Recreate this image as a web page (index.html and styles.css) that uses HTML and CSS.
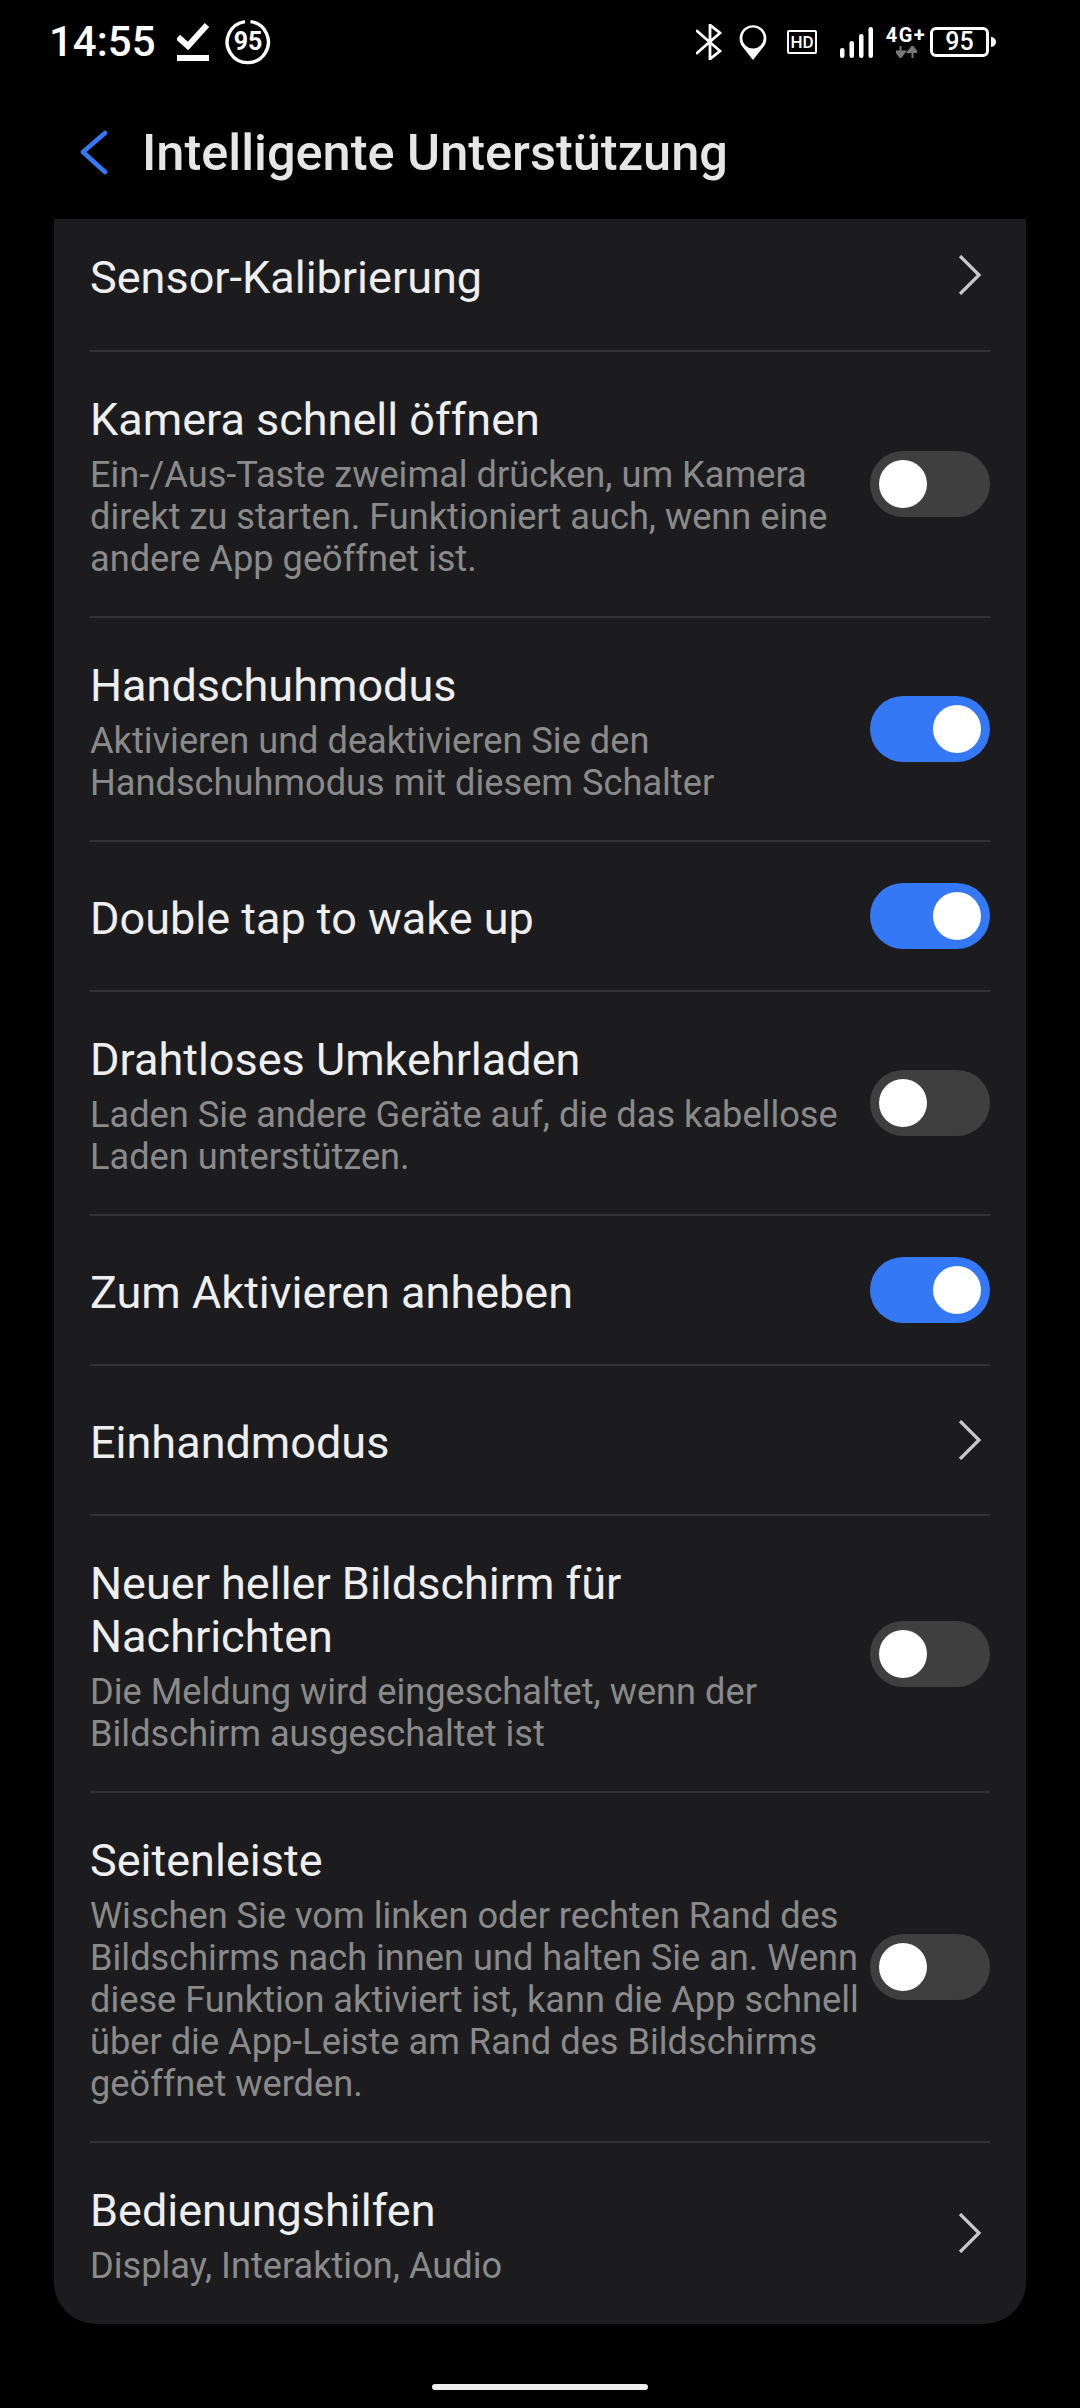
FILE: index.html
```html
<!DOCTYPE html>
<html lang="de">
<head>
    <meta charset="UTF-8">
    <meta name="viewport" content="width=device-width, initial-scale=1.0">
    <title>Intelligente Unterstützung</title>
    <link rel="stylesheet" href="styles.css">
</head>
<body>
    <div class="status">
        <div class="status-left">
            <span class="time">14:55</span>
            <svg class="ico-check" width="32" height="38" viewBox="0 0 32 38">
                <path d="M1 14 L11 23 L30 2" fill="none" stroke="#fff" stroke-width="6"/>
                <rect x="0" y="32" width="32" height="6" fill="#fff"/>
            </svg>
            <div class="ring">
                <svg width="46" height="46" viewBox="0 0 46 46">
                    <path d="M25.5 2.6 A20.6 20.6 0 1 1 20 2.6" fill="none" stroke="#fff" stroke-width="3.4"/>
                </svg>
                <span>95</span>
            </div>
        </div>
        <div class="status-right">
            <svg class="ico-bt" width="26" height="36" viewBox="0 0 26 36">
                <path d="M1 7 L24 27 L14 35 V1 L24 9 L1 29" fill="none" stroke="#fff" stroke-width="2.8" stroke-linecap="round" stroke-linejoin="miter"/>
            </svg>
            <svg class="ico-pin" width="28" height="36" viewBox="0 0 28 36">
                <path d="M14 36 L4.5 24 A13.4 13.4 0 1 1 23.5 24 Z" fill="#fff"/>
                <circle cx="14" cy="14" r="10.6" fill="#000"/>
            </svg>
            <span class="hd">HD</span>
            <svg class="ico-signal" width="33" height="31" viewBox="0 0 33 31">
                <rect x="0" y="21" width="4.5" height="10" rx="2.2" fill="#fff"/>
                <rect x="9.5" y="14" width="4.5" height="17" rx="2.2" fill="#fff"/>
                <rect x="19" y="7" width="4.5" height="24" rx="2.2" fill="#fff"/>
                <rect x="28.5" y="0" width="4.5" height="31" rx="2.2" fill="#fff"/>
            </svg>
            <div class="net">
                <span class="net-label">4G+</span>
                <svg width="21" height="12" viewBox="0 0 21 12">
                    <path d="M4.5 0 V6 M0 5.5 L4.5 11.5 L9 5.5 Z" fill="#777" stroke="#777" stroke-width="2"/>
                    <path d="M16.5 12 V6 M12 6 L16.5 0.5 L21 6 Z" fill="#777" stroke="#777" stroke-width="2"/>
                </svg>
            </div>
            <div class="battery"><span>95</span></div>
            <div class="battery-tip"></div>
        </div>
    </div>

    <div class="header">
        <svg class="back" width="30" height="46" viewBox="0 0 30 46">
            <path d="M26 3 L4 22 L26 42" fill="none" stroke="#3478f6" stroke-width="4.6" stroke-linecap="round" stroke-linejoin="round"/>
        </svg>
        <h1>Intelligente Unterstützung</h1>
    </div>

    <div class="card">
        <div class="row first">
            <div class="text"><div class="title">Sensor-Kalibrierung</div></div>
            <svg class="chev" width="24" height="40" viewBox="0 0 24 40"><path d="M2 1 L21 20 L2 39" fill="none" stroke="#c8c8c8" stroke-width="3.2"/></svg>
        </div>
        <div class="row">
            <div class="text">
                <div class="title">Kamera schnell öffnen</div>
                <div class="sub">Ein-/Aus-Taste zweimal drücken, um Kamera<br>direkt zu starten. Funktioniert auch, wenn eine<br>andere App geöffnet ist.</div>
            </div>
            <div class="toggle"></div>
        </div>
        <div class="row">
            <div class="text">
                <div class="title">Handschuhmodus</div>
                <div class="sub">Aktivieren und deaktivieren Sie den<br>Handschuhmodus mit diesem Schalter</div>
            </div>
            <div class="toggle on"></div>
        </div>
        <div class="row">
            <div class="text"><div class="title">Double tap to wake up</div></div>
            <div class="toggle on"></div>
        </div>
        <div class="row">
            <div class="text">
                <div class="title">Drahtloses Umkehrladen</div>
                <div class="sub">Laden Sie andere Geräte auf, die das kabellose<br>Laden unterstützen.</div>
            </div>
            <div class="toggle"></div>
        </div>
        <div class="row">
            <div class="text"><div class="title">Zum Aktivieren anheben</div></div>
            <div class="toggle on"></div>
        </div>
        <div class="row">
            <div class="text"><div class="title">Einhandmodus</div></div>
            <svg class="chev" width="24" height="40" viewBox="0 0 24 40"><path d="M2 1 L21 20 L2 39" fill="none" stroke="#c8c8c8" stroke-width="3.2"/></svg>
        </div>
        <div class="row">
            <div class="text">
                <div class="title">Neuer heller Bildschirm für<br>Nachrichten</div>
                <div class="sub">Die Meldung wird eingeschaltet, wenn der<br>Bildschirm ausgeschaltet ist</div>
            </div>
            <div class="toggle"></div>
        </div>
        <div class="row">
            <div class="text">
                <div class="title">Seitenleiste</div>
                <div class="sub">Wischen Sie vom linken oder rechten Rand des<br>Bildschirms nach innen und halten Sie an. Wenn<br>diese Funktion aktiviert ist, kann die App schnell<br>über die App-Leiste am Rand des Bildschirms<br>geöffnet werden.</div>
            </div>
            <div class="toggle"></div>
        </div>
        <div class="row last">
            <div class="text">
                <div class="title">Bedienungshilfen</div>
                <div class="sub">Display, Interaktion, Audio</div>
            </div>
            <svg class="chev" width="24" height="40" viewBox="0 0 24 40"><path d="M2 1 L21 20 L2 39" fill="none" stroke="#c8c8c8" stroke-width="3.2"/></svg>
        </div>
    </div>

    <div class="home"><div class="home-bar"></div></div>
</body>
</html>
```

FILE: styles.css
```css
* {
    box-sizing: border-box;
}

body {
    margin: 0;
    width: 1080px;
    height: 2408px;
    overflow: hidden;
    background: #000;
    color: #fff;
    font-family: Roboto, "Noto Sans", sans-serif;
}

/* status bar */
.status {
    height: 84px;
    display: flex;
    justify-content: space-between;
    align-items: center;
    padding: 0 84px 0 49px;
}
.status-left, .status-right {
    display: flex;
    align-items: center;
}
.time {
    font-size: 42px;
    font-weight: 500;
    line-height: 48px;
    width: 128px;
}
.ring {
    position: relative;
    width: 46px;
    height: 46px;
    margin-left: 16px;
}
.ring svg {
    display: block;
}
.ring span {
    position: absolute;
    inset: 0;
    text-align: center;
    font-size: 25px;
    font-weight: 700;
    line-height: 46px;
}
.ico-pin {
    margin-left: 17px;
}
.hd {
    width: 30px;
    height: 24px;
    margin-left: 20px;
    border: 2px solid #fff;
    border-radius: 2px;
    font-size: 17px;
    font-weight: 500;
    line-height: 20px;
    text-align: center;
}
.ico-signal {
    margin-left: 23px;
}
.net {
    display: flex;
    flex-direction: column;
    align-items: center;
    width: 42px;
    margin-left: 12px;
}
.net-label {
    font-size: 20px;
    font-weight: 700;
    line-height: 18px;
    letter-spacing: 1.5px;
}
.net svg {
    display: block;
    margin-top: 2px;
}
.battery {
    width: 59px;
    height: 30px;
    margin-left: 3px;
    border: 3px solid #fff;
    border-radius: 6px;
    font-size: 25px;
    font-weight: 500;
    line-height: 24px;
    text-align: center;
}
.battery-tip {
    width: 5px;
    height: 10px;
    margin-left: 2px;
    background: #fff;
    border-radius: 0 5px 5px 0;
}

/* page header */
.header {
    height: 135px;
    display: flex;
    align-items: center;
    padding: 2px 0 0 79px;
}
.back {
    flex: none;
}
h1 {
    margin: 0 0 0 33px;
    font-size: 50.5px;
    font-weight: 500;
    color: #e6e6e6;
}

/* settings list */
.card {
    margin: 0 54px;
    height: 2105px;
    padding: 0 36px;
    background: #1c1c1e;
    border-radius: 0 0 42px 42px;
}
.row {
    display: flex;
    align-items: center;
    justify-content: space-between;
    min-height: 150px;
    border-bottom: 2px solid #333335;
}
.row.first {
    min-height: 133px;
    height: 133px;
    padding-bottom: 20px;
}
.row.last {
    border-bottom: 0;
}
.text {
    padding: 41px 0 36px;
}
.title {
    font-size: 45px;
    line-height: 53px;
    color: #eee;
}
.sub {
    margin-top: 8px;
    font-size: 36.2px;
    line-height: 42px;
    color: #8a8a8a;
}
.chev {
    flex: none;
    margin-right: 8px;
}

.toggle {
    flex: none;
    position: relative;
    width: 120px;
    height: 66px;
    border-radius: 33px;
    background: #3f3f3f;
}
.toggle::after {
    content: "";
    position: absolute;
    top: 9px;
    left: 9px;
    width: 48px;
    height: 48px;
    border-radius: 50%;
    background: #fff;
}
.toggle.on {
    background: #3478f6;
}
.toggle.on::after {
    left: 63px;
}

/* gesture bar */
.home {
    display: flex;
    justify-content: center;
    padding-top: 60px;
}
.home-bar {
    width: 216px;
    height: 6px;
    border-radius: 3px;
    background: #eee;
}
```
